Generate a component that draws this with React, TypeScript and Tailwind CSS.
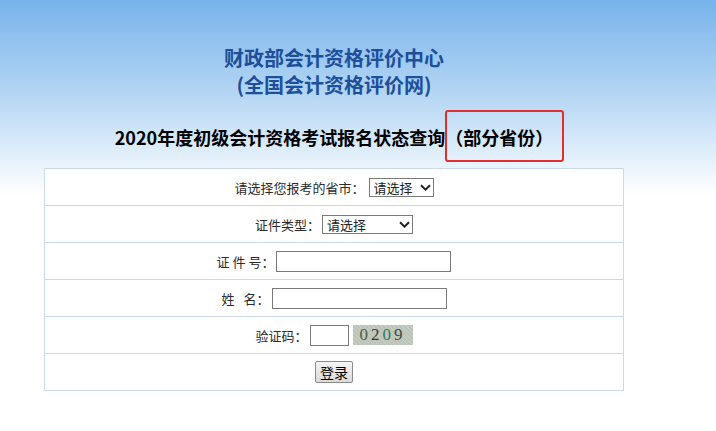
import React from 'react';

function Chevron() {
  return (
    <svg
      className="absolute right-[3px] top-[6px] pointer-events-none"
      width="11"
      height="7"
      viewBox="0 0 11 7"
      fill="none"
    >
      <path d="M1 1.2 L5.5 5.6 L10 1.2" stroke="#222" strokeWidth="2" />
    </svg>
  );
}

function FakeSelect({ width }: { width: string }) {
  return (
    <span className="relative inline-block align-middle">
      <select
        className={`appearance-none h-[19px] ${width} border border-[#7a7a7a] bg-white pl-[4px] text-[13px] leading-[17px] text-[#222] rounded-none outline-none`}
        defaultValue=""
      >
        <option value="">请选择</option>
      </select>
      <Chevron />
    </span>
  );
}

function Row({ children }: { children: React.ReactNode }) {
  return (
    <tr>
      <td className="h-[37px] border border-[#c9d9e6] p-0 text-center align-middle">
        {children}
      </td>
    </tr>
  );
}

export default function App() {
  return (
    <div className="min-h-screen w-full bg-[linear-gradient(to_bottom,#78b3eb_0px,#b8d8f4_100px,#ffffff_195px)] font-['Noto_Sans_CJK_SC',sans-serif] pt-[44px]">
      <div className="w-[580px] ml-[44px] text-center">
        <div className="text-[20px] leading-[27px] font-bold text-[#1d4f9b]">财政部会计资格评价中心</div>
        <div className="text-[20px] leading-[27px] font-bold text-[#1d4f9b]">(全国会计资格评价网)</div>

        <div className="mt-[25px] text-[18px] leading-[28px] font-bold text-black">
          2020年度初级会计资格考试报名状态查询
          <span className="relative">
            （部分省份）
            {/* annotation box */}
            <span className="absolute left-0 -right-[11px] -top-[14px] -bottom-[12px] border-2 border-[#e0302d] rounded-[3px] pointer-events-none" />
          </span>
        </div>

        <table className="mt-[17px] w-[580px] border-collapse bg-white text-[13px] text-[#2b2b2b]">
          <tbody>
            <Row>
              <span className="align-middle">请选择您报考的省市：</span>
              <span className="ml-[4px]" />
              <FakeSelect width="w-[65px]" />
            </Row>
            <Row>
              <span className="align-middle">证件类型：</span>
              <span className="ml-[2px]" />
              <FakeSelect width="w-[91px]" />
            </Row>
            <Row>
              <span className="align-middle">证 件 号：</span>
              <input className="ml-[2px] h-[21px] w-[175px] border border-[#7a7a7a] bg-white align-middle outline-none" />
            </Row>
            <Row>
              <span className="align-middle">
                <span className="mr-[9px]">姓</span>名：
              </span>
              <input className="ml-[2px] h-[21px] w-[175px] border border-[#7a7a7a] bg-white align-middle outline-none" />
            </Row>
            <Row>
              <span className="align-middle">验证码：</span>
              <input className="ml-[2px] h-[21px] w-[39px] border border-[#7a7a7a] bg-white align-middle outline-none" />
              <span className="ml-[4px] inline-flex h-[20px] w-[60px] items-center justify-center align-middle bg-[repeating-linear-gradient(45deg,#c6cdc3_0px,#b7c0b4_2px,#cbd1c8_3px)] font-['Liberation_Serif',serif] text-[17px] leading-[20px] tracking-[3px]">
                <span className="text-[#4d5d40]">0</span>
                <span className="text-[#333a33]">2</span>
                <span className="text-[#2d7a5c]">0</span>
                <span className="text-[#3c4a3c]">9</span>
              </span>
            </Row>
            <Row>
              <button className="h-[22px] w-[38px] border border-[#8a8a8a] rounded-[2px] bg-gradient-to-b from-[#f5f5f5] to-[#dadada] text-[14px] leading-[20px] text-black align-middle">
                登录
              </button>
            </Row>
          </tbody>
        </table>
      </div>
    </div>
  );
}
